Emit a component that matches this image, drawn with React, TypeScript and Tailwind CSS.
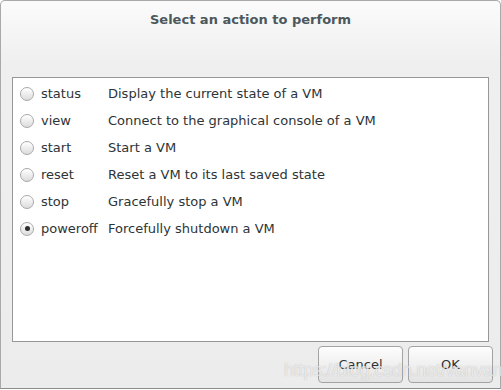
import React, { useState } from 'react';

const actions = [
  { name: 'status', desc: 'Display the current state of a VM' },
  { name: 'view', desc: 'Connect to the graphical console of a VM' },
  { name: 'start', desc: 'Start a VM' },
  { name: 'reset', desc: 'Reset a VM to its last saved state' },
  { name: 'stop', desc: 'Gracefully stop a VM' },
  { name: 'poweroff', desc: 'Forcefully shutdown a VM' },
];

const Radio: React.FC<{ checked: boolean }> = ({ checked }) => (
  <span className="w-[14px] h-[14px] rounded-full border border-[#a8a8a8] bg-gradient-to-b from-[#ffffff] to-[#dcdcdc] shadow-[inset_0_1px_0_#fff] flex items-center justify-center shrink-0">
    {checked && <span className="w-[5px] h-[5px] rounded-full bg-[#2e2e2e]" />}
  </span>
);

export default function App() {
  const [selected, setSelected] = useState('poweroff');

  return (
    <div className="w-[501px] h-[390px] overflow-hidden bg-white font-['DejaVu_Sans',sans-serif] text-[13px] text-[#2e3436]">
      <div className="relative w-full h-[389px] rounded-t-[5px] border border-b-[#8c8c8c] border-[#a9a9a9] bg-gradient-to-b from-[#fbfbfb] via-[#efefef] via-[16%] to-[#ececec] flex flex-col">
        {/* Title */}
        <div className="h-[38px] flex items-center justify-center font-bold text-[#4c585c]">
          Select an action to perform
        </div>

        {/* Action list */}
        <div className="mt-[38px] mx-[11px] h-[265px] bg-white border border-[#979797] pt-[2px]">
          {actions.map(a => (
            <button
              key={a.name}
              onClick={() => setSelected(a.name)}
              className="w-full h-[27px] flex items-center pl-[7px] text-left"
            >
              <Radio checked={selected === a.name} />
              <span className="w-[74px] pl-[7px] leading-none">{a.name}</span>
              <span className="leading-none">{a.desc}</span>
            </button>
          ))}
        </div>

        {/* Buttons */}
        <div className="flex justify-end gap-[5px] pr-[7px] pt-[4px]">
          <button className="w-[85px] h-[37px] rounded-[4px] border border-[#a3a3a3] bg-gradient-to-b from-[#fdfdfd] to-[#e3e3e3] text-[#2e3436]">
            Cancel
          </button>
          <button className="w-[85px] h-[37px] rounded-[4px] border border-[#a3a3a3] bg-gradient-to-b from-[#fdfdfd] to-[#e3e3e3] text-[#2e3436]">
            OK
          </button>
        </div>

        {/* Watermark */}
        <span className="absolute left-[283px] top-[356px] text-[18px] tracking-[-0.2px] font-['Liberation_Sans',sans-serif] text-white/70 [text-shadow:0_0_1px_rgba(120,120,120,0.5)] pointer-events-none">
          https://blog.csdn.net/vanvan_
        </span>
      </div>
    </div>
  );
}
